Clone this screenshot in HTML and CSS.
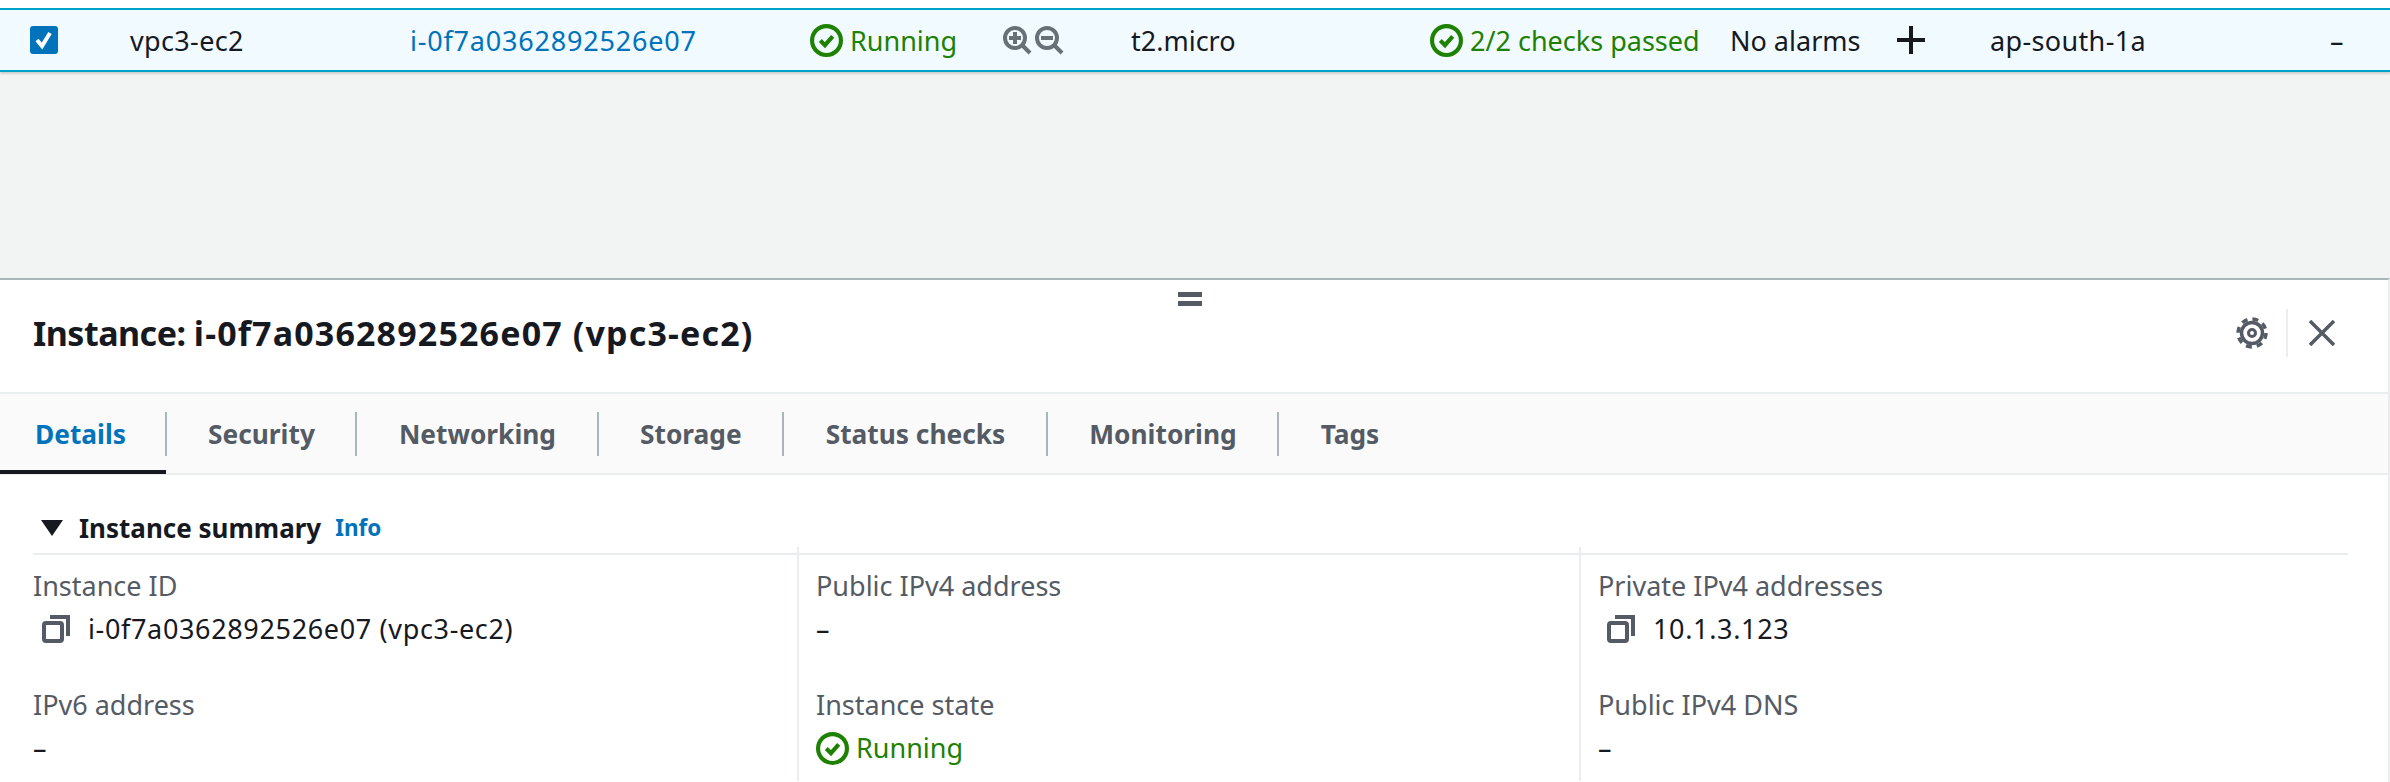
FILE: index.html
```html
<!DOCTYPE html>
<html lang="en">
<head>
  <meta charset="UTF-8">
  <title>Instance details</title>
  <link rel="stylesheet" href="styles.css">
</head>
<body>
  <svg class="sprites" width="0" height="0">
    <symbol id="check" viewBox="0 0 32 32">
      <circle cx="16" cy="16" r="14" fill="none" stroke="currentColor" stroke-width="4"/>
      <path d="M10 16l4.5 4.5L22 12" fill="none" stroke="currentColor" stroke-width="4"/>
    </symbol>
    <symbol id="copy" viewBox="0 0 28 28">
      <rect x="2" y="8" width="18" height="18" rx="2" fill="none" stroke="currentColor" stroke-width="4"/>
      <path d="M8 2h18v19" fill="none" stroke="currentColor" stroke-width="4"/>
    </symbol>
  </svg>

  <div class="row">
    <div class="cell cell-check">
      <svg class="checkbox" viewBox="0 0 28 28">
        <rect width="28" height="28" rx="3" fill="#0073bb"/>
        <path d="M7 14l5 6 8-13" fill="none" stroke="#fff" stroke-width="4"/>
      </svg>
    </div>
    <div class="cell cell-name">vpc3-ec2</div>
    <div class="cell cell-id"><a class="link" href="#">i-0f7a0362892526e07</a></div>
    <div class="cell cell-state status"><svg class="status-icon"><use href="#check"/></svg>Running</div>
    <div class="cell cell-zoom">
      <svg class="zoom-icon" viewBox="0 0 29 29">
        <circle cx="12" cy="12" r="10" fill="none" stroke="currentColor" stroke-width="4"/>
        <path d="M19 19l8 8" stroke="currentColor" stroke-width="4"/>
        <path d="M12 6v12M6 12h12" stroke="currentColor" stroke-width="4"/>
      </svg>
      <svg class="zoom-icon" viewBox="0 0 29 29">
        <circle cx="12" cy="12" r="10" fill="none" stroke="currentColor" stroke-width="4"/>
        <path d="M19 19l8 8" stroke="currentColor" stroke-width="4"/>
        <path d="M6 12h12" stroke="currentColor" stroke-width="4"/>
      </svg>
    </div>
    <div class="cell cell-type">t2.micro</div>
    <div class="cell cell-checks status"><svg class="status-icon"><use href="#check"/></svg><span class="clip">2/2 checks passed</span></div>
    <div class="cell cell-alarms">No alarms</div>
    <div class="cell cell-add">
      <svg class="plus" viewBox="0 0 28 28"><path d="M14 0v28M0 14h28" stroke="currentColor" stroke-width="4"/></svg>
    </div>
    <div class="cell cell-zone">ap-south-1a</div>
    <div class="cell cell-dash">–</div>
  </div>

  <div class="panel">
    <div class="handle"></div>
    <div class="panel-header">
      <h2 class="panel-title">Instance: <span class="title-id">i-0f7a0362892526e07 (vpc3-ec2)</span></h2>
      <div class="panel-actions">
        <svg class="gear" viewBox="0 0 32 32">
          <circle cx="16" cy="16" r="10.5" fill="none" stroke="currentColor" stroke-width="3.5"/>
          <circle cx="16" cy="16" r="14" fill="none" stroke="currentColor" stroke-width="3.5" stroke-dasharray="6 4.995"/>
          <circle cx="16" cy="16" r="3.5" fill="none" stroke="currentColor" stroke-width="3"/>
        </svg>
        <span class="actions-sep"></span>
        <svg class="close" viewBox="0 0 26 26"><path d="M1 1l24 24M25 1L1 25" stroke="currentColor" stroke-width="3.5"/></svg>
      </div>
    </div>

    <div class="tabs">
      <a class="tab active">Details</a>
      <a class="tab">Security</a>
      <a class="tab">Networking</a>
      <a class="tab">Storage</a>
      <a class="tab">Status checks</a>
      <a class="tab">Monitoring</a>
      <a class="tab">Tags</a>
    </div>

    <div class="summary">
      <div class="summary-head">
        <span class="caret"></span>
        <span class="summary-title">Instance summary</span>
        <a class="info" href="#">Info</a>
      </div>
      <div class="summary-grid">
        <div class="col">
          <div class="field">
            <div class="label">Instance ID</div>
            <div class="value copyable"><svg class="copy-icon"><use href="#copy"/></svg>i-0f7a0362892526e07 (vpc3-ec2)</div>
          </div>
          <div class="field">
            <div class="label">IPv6 address</div>
            <div class="value">–</div>
          </div>
        </div>
        <div class="col">
          <div class="field">
            <div class="label">Public IPv4 address</div>
            <div class="value">–</div>
          </div>
          <div class="field">
            <div class="label">Instance state</div>
            <div class="value status"><svg class="status-icon"><use href="#check"/></svg>Running</div>
          </div>
        </div>
        <div class="col">
          <div class="field">
            <div class="label">Private IPv4 addresses</div>
            <div class="value copyable"><svg class="copy-icon"><use href="#copy"/></svg>10.1.3.123</div>
          </div>
          <div class="field">
            <div class="label">Public IPv4 DNS</div>
            <div class="value">–</div>
          </div>
        </div>
      </div>
    </div>
  </div>
</body>
</html>
```

FILE: styles.css
```css
* {
  box-sizing: border-box;
}

html, body {
  height: 782px;
  overflow: hidden;
}

body {
  margin: 0;
  padding-top: 8px;
  background: linear-gradient(#fff 8px, #f2f3f3 8px);
  font-family: "Noto Sans", sans-serif;
  font-size: 27px;
  color: #16191f;
}

.sprites {
  display: block;
  height: 0;
}

.link, .info {
  color: #0073bb;
  text-decoration: none;
}

.status {
  display: flex;
  align-items: center;
  gap: 7px;
  color: #1d8102;
}

.status-icon {
  width: 33px;
  height: 33px;
  flex: none;
}

/* selected table row */
.row {
  display: grid;
  grid-template-columns: 100px 280px 400px 193px 128px 299px 300px 167px 93px 340px 1fr;
  align-items: center;
  height: 64px;
  padding-left: 30px;
  background: #f1faff;
  border-top: 2px solid #00a1c9;
  border-bottom: 2px solid #00a1c9;
  box-shadow: 0 2px 2px rgba(0, 0, 0, 0.15);
}

.cell {
  white-space: nowrap;
}

.cell-id {
  letter-spacing: 0.8px;
}

.cell-name, .cell-zone {
  letter-spacing: 0.35px;
}

.checkbox {
  display: block;
  width: 28px;
  height: 28px;
}

.cell-zoom {
  display: flex;
  gap: 3px;
  color: #687078;
}

.zoom-icon {
  width: 29px;
  height: 29px;
}

.cell-checks {
  padding-right: 30px;
}

.clip {
  min-width: 0;
  overflow: hidden;
}

.plus {
  display: block;
  width: 28px;
  height: 28px;
}

/* split panel */
.panel {
  position: relative;
  margin-top: 206px;
  height: 504px;
  overflow: hidden;
  background: #fff;
  border-top: 2px solid #aab7b8;
  border-right: 2px solid #eaeded;
}

.handle {
  position: absolute;
  top: 12px;
  left: 1178px;
  width: 24px;
  height: 14px;
  border-top: 5px solid #545b64;
  border-bottom: 5px solid #545b64;
}

.panel-header {
  display: flex;
  align-items: center;
  justify-content: space-between;
  height: 112px;
  padding: 0 53px 6px 33px;
}

.panel-title {
  margin: 0;
  font-size: 34px;
  font-weight: 700;
  letter-spacing: -0.5px;
}

.title-id {
  letter-spacing: 1.15px;
}

.panel-actions {
  display: flex;
  align-items: center;
  color: #545b64;
}

.gear {
  width: 32px;
  height: 32px;
}

.actions-sep {
  width: 2px;
  height: 48px;
  margin: 0 21px 0 18px;
  background: #eaeded;
}

.close {
  width: 26px;
  height: 26px;
}

.tabs {
  display: flex;
  height: 83px;
  padding-top: 18px;
  background: #fafafa;
  border-top: 2px solid #eaeded;
  border-bottom: 2px solid #eaeded;
}

.tab {
  position: relative;
  height: 44px;
  padding: 0 40.5px 0 41.5px;
  border-right: 2px solid #aab7b8;
  font-size: 26.3px;
  font-weight: 700;
  line-height: 44px;
  color: #545b64;
}

.tab:last-child {
  border-right: none;
}

.tab.active {
  padding: 0 38.5px 0 35px;
  color: #0073bb;
}

.tab.active::after {
  content: "";
  position: absolute;
  left: 0;
  right: -1px;
  top: 58px;
  height: 4px;
  background: #16191f;
}

.summary {
  padding: 0 40px 0 33px;
}

.summary-head {
  display: flex;
  align-items: center;
  height: 80px;
  padding-top: 27px;
  border-bottom: 2px solid #eaeded;
}

.caret {
  width: 0;
  height: 0;
  margin: 0 16px 0 8px;
  border-left: 11px solid transparent;
  border-right: 11px solid transparent;
  border-top: 16px solid #16191f;
}

.summary-title {
  font-size: 26px;
  font-weight: 700;
}

.info {
  margin-left: 14px;
  font-size: 22.5px;
  font-weight: 700;
}

.summary-grid {
  display: grid;
  grid-template-columns: 764px 782px 1fr;
  margin-top: -8px;
}

.col {
  height: 234px;
  padding-top: 19px;
}

.col + .col {
  padding-left: 17px;
  border-left: 2px solid #eaeded;
}

.field {
  height: 119px;
}

.label {
  height: 43px;
  line-height: 40px;
  color: #545b64;
}

.value {
  line-height: 40px;
}

.copyable {
  display: flex;
  align-items: center;
  gap: 18px;
  padding-left: 9px;
  letter-spacing: 0.65px;
}

.copy-icon {
  width: 28px;
  height: 28px;
  flex: none;
  color: #545b64;
}
```
